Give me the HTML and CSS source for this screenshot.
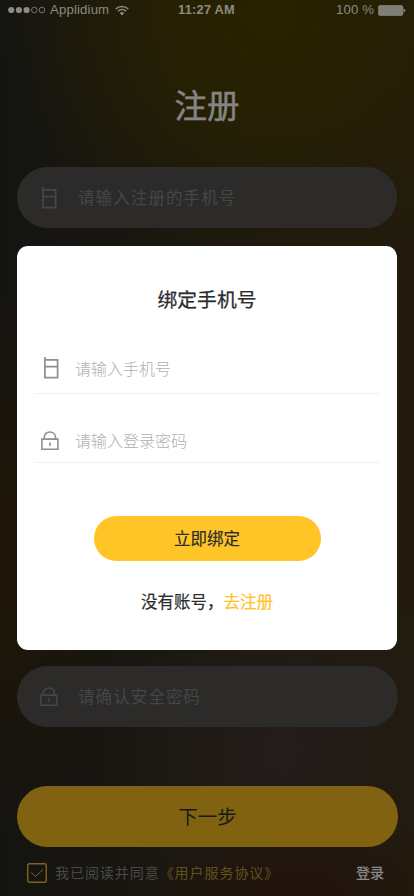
FILE: index.html
```html
<!DOCTYPE html>
<html lang="zh-CN">
<head>
<meta charset="utf-8">
<meta name="viewport" content="width=device-width, initial-scale=1">
<title>注册</title>
<link rel="stylesheet" href="styles.css">
</head>
<body>
<svg class="defs" width="0" height="0">
  <symbol id="phone" viewBox="0 0 16 24"><path d="M1.9 1V21.6H14.6V3.9H1.9M1.9 10.6H14.6" fill="none" stroke="currentColor" stroke-width="1.7"/></symbol>
  <symbol id="lock" viewBox="0 0 20 22"><path d="M1.9 9.1H17.9V19.2H1.9ZM4.2 9V7.7C4.2 4.4 6.7 2 9.9 2S15.6 4.4 15.6 7.7V9M10 12.4V16" fill="none" stroke="currentColor" stroke-width="1.6"/></symbol>
</svg>
<main class="screen">
  <header class="status">
    <div class="carrier">
      <svg width="38" height="8" viewBox="0 0 38 8"><g fill="currentColor"><circle cx="3.2" cy="4" r="3.1"/><circle cx="10.9" cy="4" r="3.1"/><circle cx="18.6" cy="4" r="3.1"/></g><g fill="none" stroke="currentColor" stroke-width=".8"><circle cx="26.3" cy="4" r="2.8"/><circle cx="34" cy="4" r="2.8"/></g></svg>
      <span class="name">Applidium</span>
      <svg class="wifi" width="14" height="11" viewBox="0 0 14 11"><g fill="none" stroke="currentColor" stroke-width="1.5"><path d="M.7 4A9 9 0 0 1 13.3 4M2.9 6.2A5.8 5.8 0 0 1 11.1 6.2"/></g><path d="M4.7 8A3.3 3.3 0 0 1 9.3 8L7 10.4Z" fill="currentColor"/></svg>
    </div>
    <span class="time">11:27 AM</span>
    <div class="power"><span>100 %</span>
      <svg width="28" height="11" viewBox="0 0 28 11"><rect x=".5" y=".5" width="24.4" height="10" rx="1.5" fill="currentColor" fill-opacity=".9" stroke="currentColor" stroke-opacity=".65"/><path d="M25.6 3.6Q27.4 4 27.4 5.5T25.6 7.4Z" fill="currentColor"/></svg>
    </div>
  </header>
  <h1>注册</h1>
  <div class="field"><svg class="phone"><use href="#phone"/></svg><span>请输入注册的手机号</span></div>
  <div class="field second"><svg class="lock"><use href="#lock"/></svg><span>请确认安全密码</span></div>
  <div class="next">下一步</div>
  <footer>
    <svg class="check" width="20" height="20" viewBox="0 0 20 20"><rect x=".75" y=".75" width="18.5" height="18.5" rx="1.6" fill="none" stroke="currentColor" stroke-width="1.4"/><path d="M4.3 9.5 8.5 13.5 16 6.5" fill="none" stroke="currentColor"/></svg>
    <span class="agree">我已阅读并同意<b>《用户服务协议》</b></span>
    <span class="login">登录</span>
  </footer>
</main>
<section class="modal">
  <h2>绑定手机号</h2>
  <div class="row"><svg class="phone"><use href="#phone"/></svg><span>请输入手机号</span></div>
  <div class="row password"><svg class="lock"><use href="#lock"/></svg><span>请输入登录密码</span></div>
  <div class="bind">立即绑定</div>
  <p>没有账号，<a>去注册</a></p>
</section>
</body>
</html>
```
FILE: styles.css
```css
* { box-sizing: border-box; }
body { margin: 0; font-family: "Noto Sans CJK SC", sans-serif; }
.defs { position: absolute; }
.screen {
  width: 414px; height: 896px; overflow: hidden;
  display: flex; flex-direction: column;
  background:
    radial-gradient(ellipse 270px 260px at 270px 15px, #292200 0%, #262003 35%, rgba(35,28,5,0) 100%),
    radial-gradient(ellipse 170px 100px at 300px 896px, #22130b 0%, rgba(33,22,18,0) 100%),
    radial-gradient(ellipse 190px 200px at 280px 750px, #231c1b 0%, rgba(33,28,24,0) 100%),
    radial-gradient(ellipse 130px 280px at 0 560px, #201707 0%, rgba(28,22,8,0) 100%),
    linear-gradient(90deg, #141412 0%, #1a170f 45%, #221b0d 100%);
}
.status {
  height: 20px; flex: none; padding: 0 9px 0 8px;
  display: grid; grid-template-columns: 1fr auto 1fr; align-items: center;
  font-family: "Liberation Sans", sans-serif; font-size: 13.2px; line-height: 20px; color: #8b8a83;
}
.carrier, .power { display: flex; align-items: center; }
.carrier .name { margin-left: 4px; letter-spacing: .15px; }
.wifi { margin-left: 6px; }
.time { font-weight: 700; font-size: 12.8px; letter-spacing: .25px; }
.power { justify-content: flex-end; gap: 4px; letter-spacing: .1px; }
.power svg { margin-right: -1px; }
h1 { margin: 59px 0 0; height: 50px; line-height: 50px; text-align: center; font-size: 32.5px; font-weight: 400; -webkit-text-stroke: .5px currentColor; color: #858483; flex: none; }
.field {
  flex: none; width: 380px; height: 61px; margin: 38px 0 0 17px; padding-left: 22px;
  display: flex; align-items: center; border-radius: 31px; background: #2c2b29; color: #464647;
  font-size: 16.5px; letter-spacing: 1.1px;
}
.field span { margin: -1px 0 0 19px; }
.field .phone { margin: 0 2px 0 2px; }
.field.second { width: 381px; margin-top: 438px; }
.phone { width: 16px; height: 24px; flex: none; }
.lock { width: 20px; height: 22px; flex: none; }
.next {
  flex: none; width: 381px; height: 61px; margin: 59px 0 0 17px; border-radius: 31px;
  background: #806211; color: #17191b; text-align: center; font-size: 19.5px; line-height: 60px;
}
footer { display: flex; align-items: center; height: 20px; margin: 16px 30px 0 27px; line-height: 20px; font-size: 14px; }
.check { color: #80651b; }
.agree { margin: -2px 0 0 8px; letter-spacing: .95px; color: #4a4948; }
.agree b { font-weight: 400; color: #64501b; }
.login { margin: -2px 0 0 auto; -webkit-text-stroke: .3px currentColor; color: #8b8988; }
.modal {
  position: absolute; left: 17px; top: 246px; width: 380px; height: 404px;
  padding: 0 17px; border-radius: 11px; background: #fff; color: #2b2c2e;
}
h2 { margin: 38px 0 0; height: 30px; line-height: 30px; text-align: center; font-size: 19.8px; font-weight: 400; -webkit-text-stroke: .25px currentColor; }
.row {
  display: flex; align-items: center; height: 50px; margin-top: 30px; padding-left: 8px;
  border-bottom: 1px solid #f0f0f0; color: #8f8f8f; font-size: 16px; font-weight: 300;
}
.row span { margin: -2px 0 0 16px; color: #b0b0b0; }
.row .phone { margin: -1px 0 0 1px; }
.row.password { height: 47px; margin-top: 22px; padding-left: 6px; }
.row.password span { margin: 1px 0 0 15px; }
.row .lock { margin-top: 3px; }
.bind {
  width: 227px; height: 45px; margin: 53px 0 0 59.5px; border-radius: 23px; background: #ffc425;
  text-align: center; line-height: 45px; font-size: 16.5px; -webkit-text-stroke: .2px currentColor;
}
p { margin: 28px 0 0; height: 25px; line-height: 24px; text-align: center; font-size: 16.5px; -webkit-text-stroke: .2px currentColor; }
p a { color: #ffc22d; }
```
